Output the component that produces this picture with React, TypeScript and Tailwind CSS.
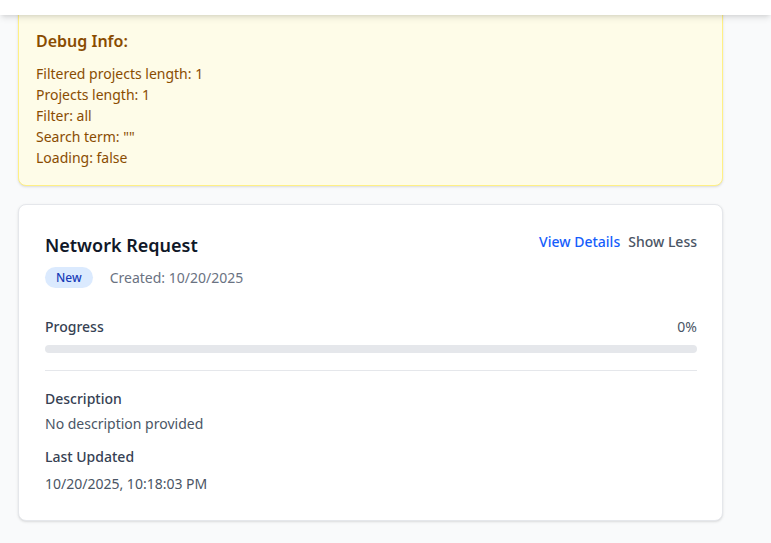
import React from 'react';

const App: React.FC = () => {
  return (
    <div className="min-h-screen bg-gray-50 font-['Noto_Sans',sans-serif] overflow-hidden h-[543px]">
      {/* Header (scrolled) */}
      <div className="relative z-10 h-[15px] bg-white shadow-md"></div>

      <div className="w-[705px] ml-[18px] -mt-[30px]">
        {/* Debug card */}
        <div className="bg-yellow-50 border border-yellow-200 rounded-lg shadow-sm px-[17px] pt-[43px] pb-[17px] text-yellow-800">
          <h3 className="text-base font-semibold mb-[10px] leading-6">Debug Info:</h3>
          <div className="text-sm leading-[21px]">
            <p>Filtered projects length: 1</p>
            <p>Projects length: 1</p>
            <p>Filter: all</p>
            <p>Search term: ""</p>
            <p>Loading: false</p>
          </div>
        </div>

        {/* Project card */}
        <div className="mt-[18px] bg-white border border-gray-200 rounded-lg shadow-sm pl-[26px] pr-[25px] pt-[26px] pb-[26px]">
          <div className="flex items-start justify-between">
            <div>
              <h2 className="text-lg font-semibold text-gray-900 leading-7">Network Request</h2>
              <div className="flex items-center gap-[17px] mt-[8px]">
                <span className="px-[11px] py-[2px] rounded-full bg-blue-100 text-blue-800 text-xs font-medium leading-[17px]">New</span>
                <span className="text-sm text-gray-500">Created: 10/20/2025</span>
              </div>
            </div>
            <div className="flex items-center gap-2 text-sm font-medium mt-[1px]">
              <button className="text-blue-600">View Details</button>
              <button className="text-gray-600">Show Less</button>
            </div>
          </div>

          <div className="mt-[29px]">
            <div className="flex justify-between text-sm mb-[8px]">
              <span className="font-medium text-gray-700">Progress</span>
              <span className="text-gray-600">0%</span>
            </div>
            <div className="h-2 w-full bg-gray-200 rounded-full"></div>
          </div>

          <div className="mt-[17px] pt-[18px] border-t border-gray-200">
            <h4 className="text-sm font-medium text-gray-700 leading-5">Description</h4>
            <p className="text-sm text-gray-600 mt-[5px] leading-5">No description provided</p>
            <h4 className="text-sm font-medium text-gray-700 mt-[13px] leading-5">Last Updated</h4>
            <p className="text-sm text-gray-600 mt-[7px] leading-5">10/20/2025, 10:18:03 PM</p>
          </div>
        </div>
      </div>
    </div>
  );
};

export default App;
